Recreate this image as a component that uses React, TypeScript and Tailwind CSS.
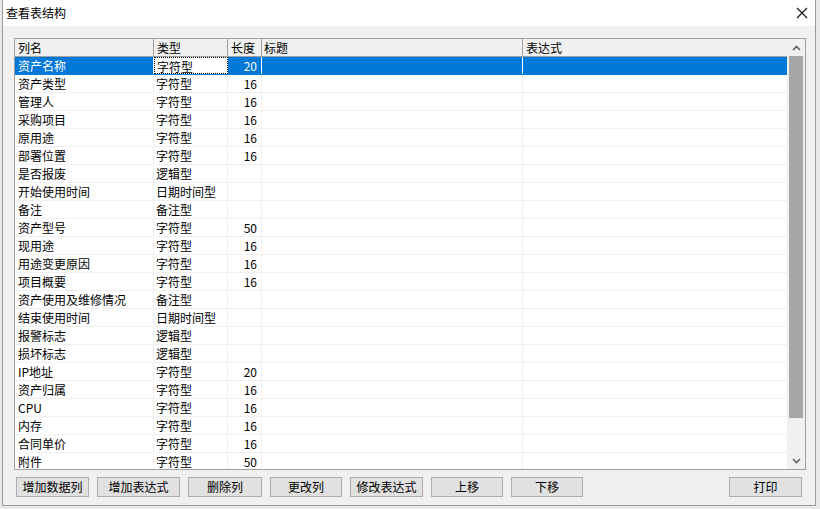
import React from "react";

type Row = { name: string; type: string; len?: number };

const rows: Row[] = [
  { name: "资产名称", type: "字符型", len: 20 },
  { name: "资产类型", type: "字符型", len: 16 },
  { name: "管理人", type: "字符型", len: 16 },
  { name: "采购项目", type: "字符型", len: 16 },
  { name: "原用途", type: "字符型", len: 16 },
  { name: "部署位置", type: "字符型", len: 16 },
  { name: "是否报废", type: "逻辑型" },
  { name: "开始使用时间", type: "日期时间型" },
  { name: "备注", type: "备注型" },
  { name: "资产型号", type: "字符型", len: 50 },
  { name: "现用途", type: "字符型", len: 16 },
  { name: "用途变更原因", type: "字符型", len: 16 },
  { name: "项目概要", type: "字符型", len: 16 },
  { name: "资产使用及维修情况", type: "备注型" },
  { name: "结束使用时间", type: "日期时间型" },
  { name: "报警标志", type: "逻辑型" },
  { name: "损坏标志", type: "逻辑型" },
  { name: "IP地址", type: "字符型", len: 20 },
  { name: "资产归属", type: "字符型", len: 16 },
  { name: "CPU", type: "字符型", len: 16 },
  { name: "内存", type: "字符型", len: 16 },
  { name: "合同单价", type: "字符型", len: 16 },
  { name: "附件", type: "字符型", len: 50 },
];

const buttons: { label: string; w: string }[] = [
  { label: "增加数据列", w: "w-[73px]" },
  { label: "增加表达式", w: "w-[83px]" },
  { label: "删除列", w: "w-[74px]" },
  { label: "更改列", w: "w-[72px]" },
  { label: "修改表达式", w: "w-[73px]" },
  { label: "上移", w: "w-[72px]" },
  { label: "下移", w: "w-[72px]" },
];

function Btn({ label, w }: { label: string; w: string }) {
  return (
    <button className={`${w} h-[20px] bg-[#e1e1e1] border border-[#adadad] text-[12px] leading-none text-black flex items-center justify-center`}>
      {label}
    </button>
  );
}

function Chevron({ up }: { up?: boolean }) {
  return (
    <svg width="9" height="6" viewBox="0 0 9 6">
      <path
        d={up ? "M1 5 L4.5 1.5 L8 5" : "M1 1 L4.5 4.5 L8 1"}
        fill="none"
        stroke="#606060"
        strokeWidth="1.6"
      />
    </svg>
  );
}

export default function App() {
  return (
    <div
      className="w-[820px] h-[509px] bg-[#e9e9e9] pl-[2px] overflow-hidden"
      style={{ fontFamily: '"Noto Sans CJK SC", "Liberation Sans", sans-serif' }}
    >
      <div className="w-[814px] h-[506px] border-x border-b border-[#9a9a9a] bg-[#f0f0f0] flex flex-col">
        {/* Title bar */}
        <div className="h-[26px] bg-white flex items-center justify-between shrink-0">
          <span className="pl-[3px] text-[12px] text-black leading-none">查看表结构</span>
          <svg width="12" height="12" viewBox="0 0 12 12" className="mr-[7px]">
            <path d="M1 1 L11 11 M11 1 L1 11" stroke="#111" strokeWidth="1.1" />
          </svg>
        </div>

        {/* List view */}
        <div className="ml-[11px] mt-[12px] w-[792px] h-[432px] border border-[#a0a0a0] bg-white flex overflow-hidden">
          <div className="w-[772px] flex flex-col text-[12px] text-black">
            <div className="h-[18px] bg-[#f0f0f0] border-b border-[#a0a0a0] flex shrink-0 leading-[17px]">
              <div className="w-[139px] pl-[3px] border-r border-[#a0a0a0]">列名</div>
              <div className="w-[74px] pl-[3px] border-r border-[#a0a0a0]">类型</div>
              <div className="w-[34px] pl-[3px] border-r border-[#a0a0a0]">长度</div>
              <div className="w-[261px] pl-[2px] border-r border-[#a0a0a0]">标题</div>
              <div className="flex-1 pl-[3px]">表达式</div>
            </div>
            {rows.map((r, i) => {
              const sel = i === 0;
              return (
                <div
                  key={r.name}
                  className={`h-[18px] flex shrink-0 leading-[17px] border-b ${sel ? "bg-[#0078d7] text-white border-[#0078d7]" : "border-[#f0f0f0]"}`}
                >
                  <div className={`w-[139px] pl-[3px] border-r ${sel ? "border-white" : "border-[#f0f0f0]"}`}>{r.name}</div>
                  <div
                    className={`w-[74px] pl-[2px] border-r ${sel ? "bg-white text-black border border-dotted border-black" : "border-[#f0f0f0]"}`}
                  >
                    {r.type}
                  </div>
                  <div className={`w-[34px] pr-[4px] text-right border-r ${sel ? "border-white" : "border-[#f0f0f0]"}`}>
                    {r.len ?? ""}
                  </div>
                  <div className={`w-[261px] border-r ${sel ? "border-white" : "border-[#f0f0f0]"}`}></div>
                  <div className="flex-1"></div>
                </div>
              );
            })}
          </div>
          {/* Scrollbar */}
          <div className="w-[18px] bg-[#f0f0f0] flex flex-col shrink-0">
            <div className="h-[17px] flex items-center justify-center shrink-0">
              <Chevron up />
            </div>
            <div className="flex-1 flex flex-col px-[2px]">
              <div className="h-[362px] bg-[#a6a6a6]"></div>
            </div>
            <div className="h-[17px] flex items-center justify-center shrink-0">
              <Chevron />
            </div>
          </div>
        </div>

        {/* Buttons */}
        <div className="ml-[13px] mt-[7px] flex items-center w-[786px]">
          <div className="flex gap-[8px]">
            {buttons.map((b) => (
              <Btn key={b.label} label={b.label} w={b.w} />
            ))}
          </div>
          <div className="flex-1"></div>
          <Btn label="打印" w="w-[73px]" />
        </div>
      </div>
    </div>
  );
}
